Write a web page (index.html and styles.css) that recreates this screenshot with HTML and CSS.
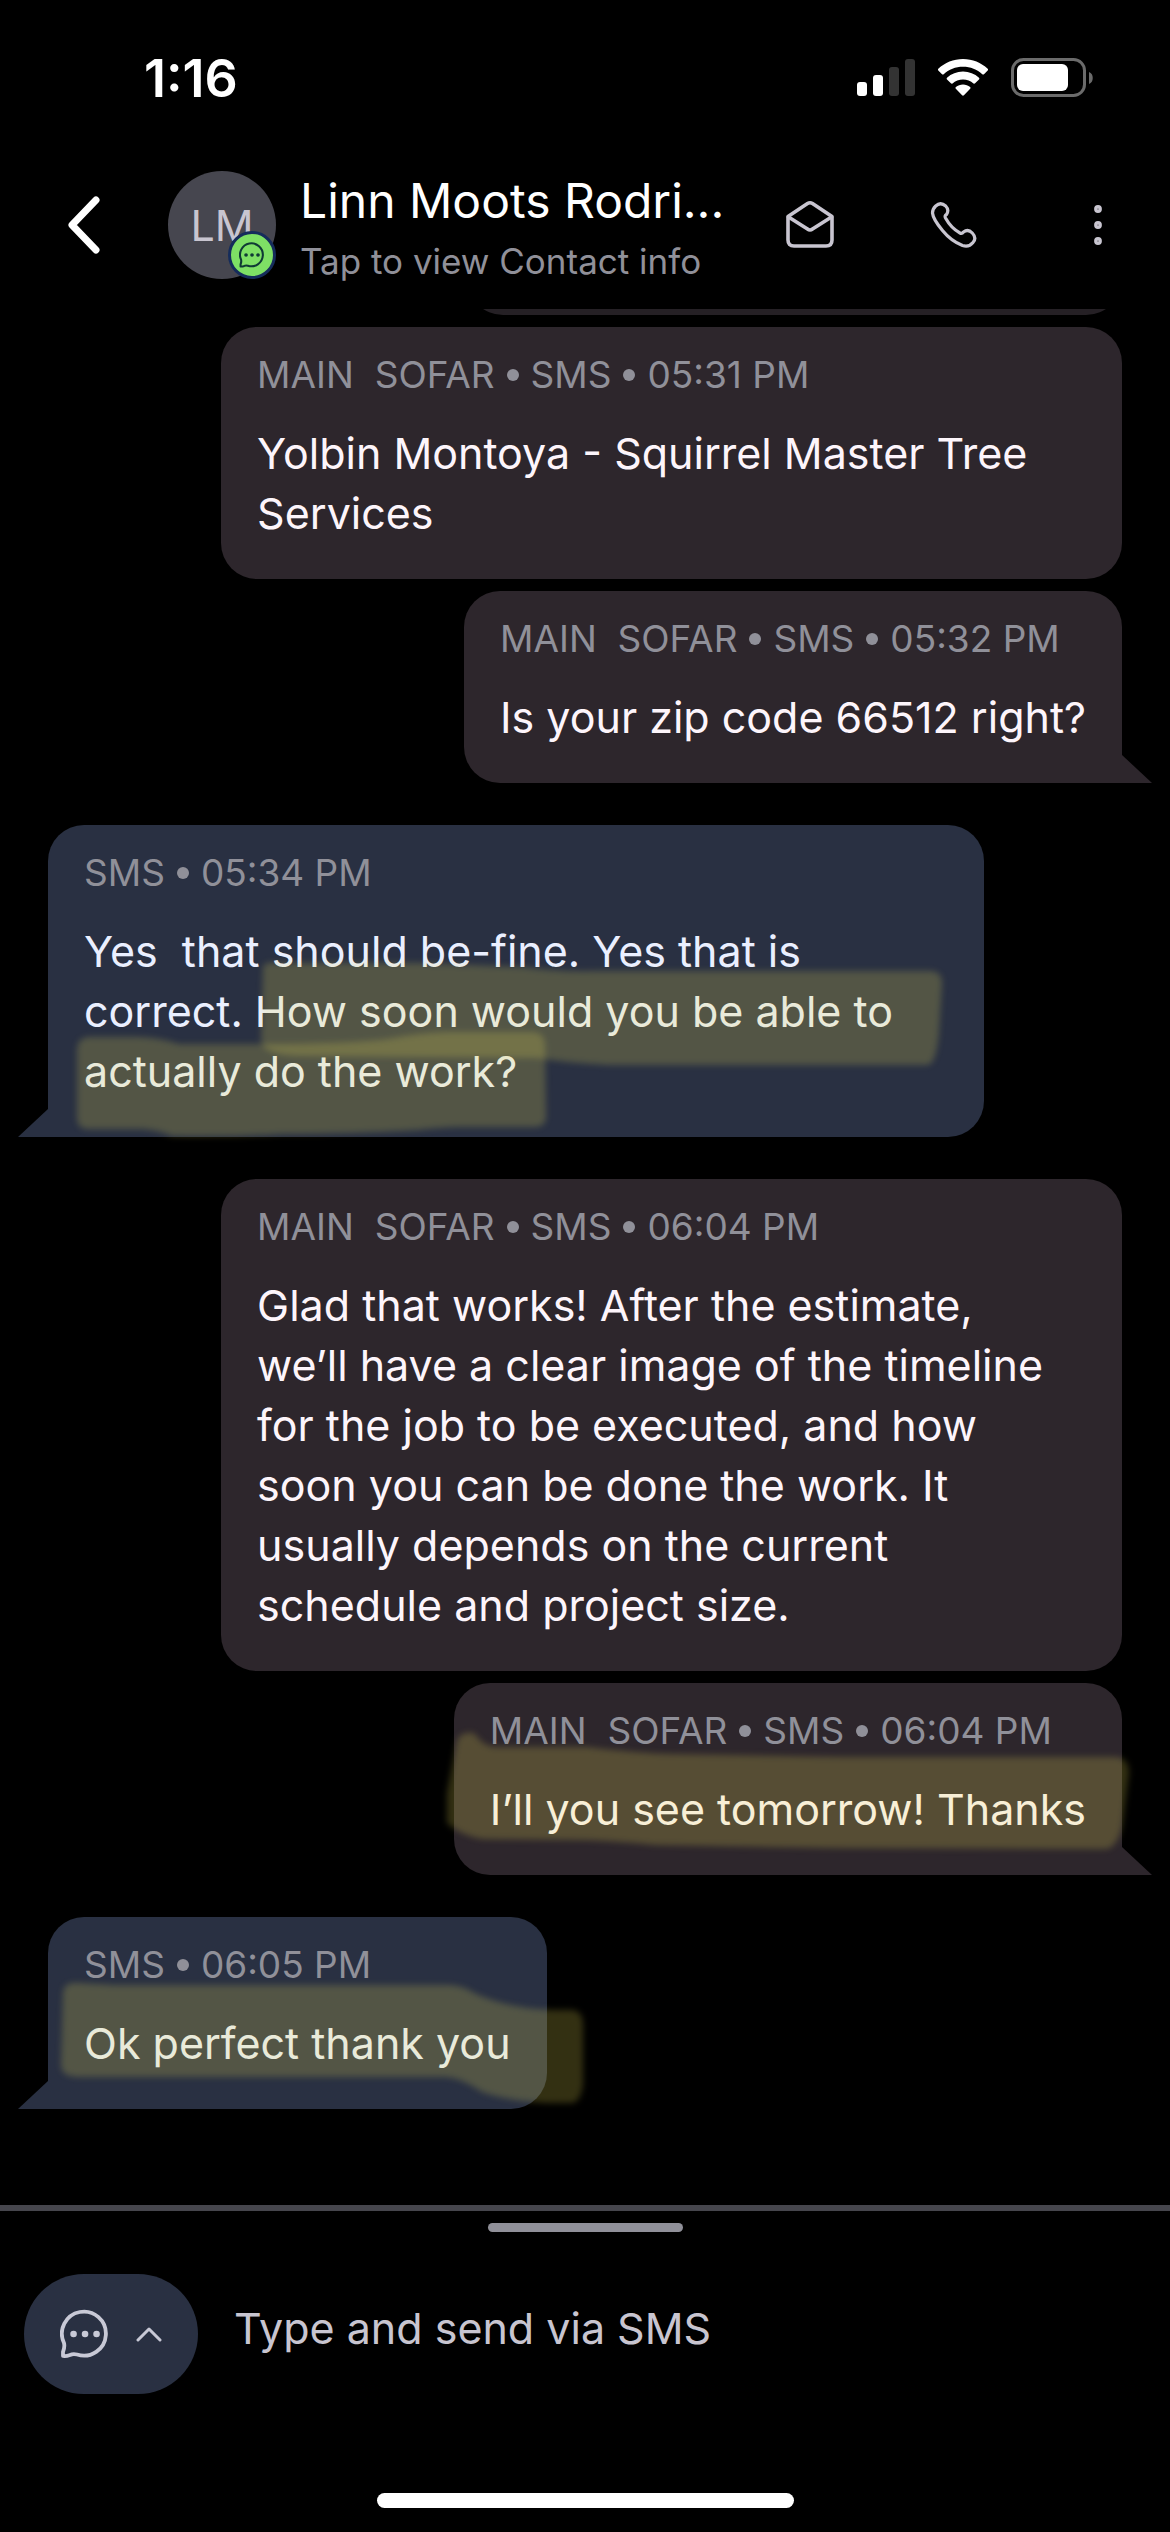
FILE: index.html
```html
<!DOCTYPE html>
<html lang="en">
<head>
  <meta charset="UTF-8" />
  <meta name="viewport" content="width=device-width, initial-scale=1.0" />
  <title>Linn Moots Rodri... – Messages</title>
  <link rel="stylesheet" href="styles.css">
</head>
<body>
  <div class="app">
    <div class="status-bar">
      <span class="clock">1:16</span>
      <div class="status-icons">
        <svg width="58" height="38" viewBox="0 0 58 38" fill="#fff">
          <rect x="0" y="23" width="10" height="14" rx="3" />
          <rect x="16" y="16" width="10" height="21" rx="3" />
          <rect x="32" y="8" width="10" height="29" rx="3" fill="#333" />
          <rect x="48" y="0" width="10" height="37" rx="3" fill="#333" />
        </svg>
        <svg width="50" height="38" viewBox="0 0 50 38" fill="#fff">
          <path d="M25 0C34.500 0 43.200 3.600 49.700 9.800C50.200 10.300 50.200 11 49.700 11.500L46 15.200C45.500 15.700 44.800 15.700 44.300 15.200C39.200 10.400 32.400 7.800 25 7.800S10.800 10.400 5.700 15.200C5.200 15.700 4.500 15.700 4 15.200L.3 11.500C-.2 11-.2 10.300.3 9.800C6.800 3.600 15.500 0 25 0Z" />
          <path d="M25 12.600C31.200 12.600 36.700 14.900 41 18.700C41.500 19.200 41.500 19.900 41 20.400L37.100 24.300C36.600 24.800 36 24.800 35.500 24.400C32.700 21.900 29 20.400 25 20.400S17.300 21.900 14.500 24.400C14 24.800 13.400 24.800 12.900 24.300L9 20.400C8.500 19.900 8.500 19.200 9 18.700C13.300 14.900 18.800 12.600 25 12.600Z" />
          <path d="M25 25.500C27.700 25.500 30.200 26.400 32.100 28C32.700 28.500 32.700 29.200 32.200 29.700L25.900 36.300C25.400 36.900 24.600 36.900 24.100 36.300L17.800 29.700C17.300 29.200 17.300 28.500 17.900 28C19.800 26.400 22.300 25.500 25 25.500Z" />
        </svg>
        <svg width="83" height="40" viewBox="0 0 83 40">
          <rect x="1.500" y="1.500" width="72" height="36" rx="11" fill="none" stroke="#6b6b6b" stroke-width="3" />
          <rect x="6" y="6" width="51" height="27" rx="6" fill="#fff" />
          <path d="M78 14C83 15.500 83 24.500 78 26Z" fill="#6b6b6b" />
        </svg>
      </div>
    </div>

    <header class="header">
      <button class="icon-button" aria-label="Back">
        <svg width="36" height="60" viewBox="0 0 36 60" fill="none" stroke="#fff" stroke-width="7" stroke-linecap="round" stroke-linejoin="round">
          <path d="M30 5L6 30L30 55" />
        </svg>
      </button>
      <div class="avatar">
        LM
        <span class="badge">
          <svg width="26" height="26" viewBox="0 0 50 50" fill="none" stroke="#0f3a35" stroke-width="4" stroke-linecap="round" stroke-linejoin="round">
            <path d="M3 47V43Q5 38 4 34A22 22 0 1 1 17 45.500Q13 44.500 10 46Q6 47.500 3 47Z" />
            <path d="M13.500 25h.1M25 25h.1M36.500 25h.1" stroke-width="7" />
          </svg>
        </span>
      </div>
      <div class="contact">
        <h1>Linn Moots Rodri...</h1>
        <p>Tap to view Contact info</p>
      </div>
      <div class="actions">
        <button class="icon-button" aria-label="Email">
          <svg width="50" height="50" viewBox="0 0 50 50" fill="none" stroke="#c8c5d0" stroke-width="3.600" stroke-linecap="round" stroke-linejoin="round">
            <path d="M3 16.500L22.500 3.500Q25 2 27.500 3.500L47 16.500V40Q47 46 41 46H9Q3 46 3 40Z" />
            <path d="M3.500 17L22.500 29Q25 31 27.500 29L46.500 17" />
          </svg>
        </button>
        <button class="icon-button" aria-label="Call">
          <svg width="50" height="50" viewBox="0 0 50 50" fill="none" stroke="#c8c5d0" stroke-width="3.200" stroke-linecap="round" stroke-linejoin="round">
            <path d="M3.500 13Q3.500 9 6.700 6Q11.500 1.500 16.700 6Q20.500 10 17.500 14.500Q15.300 15.500 16.500 18Q22 28 31 33Q33 34 34.500 32Q39 28.500 43.300 33Q48 38 44 42.500Q40 47.500 33.500 45.500Q22 41 13.500 30.500Q4 19 3.500 13Z" />
          </svg>
        </button>
        <button class="icon-button" aria-label="More options">
          <svg width="12" height="44" viewBox="0 0 12 44" fill="none" stroke="#c8c5d0" stroke-width="3.400">
            <circle cx="6" cy="6" r="2.200" />
            <circle cx="6" cy="22" r="2.200" />
            <circle cx="6" cy="38" r="2.200" />
          </svg>
        </button>
      </div>
    </header>

    <main class="conversation">
      <div class="bubble sent earlier"></div>

      <div class="bubble sent">
        <div class="meta"><span>MAIN  SOFAR</span><i></i><span>SMS</span><i></i><span>05:31 PM</span></div>
        <p>Yolbin Montoya - Squirrel Master Tree Services</p>
      </div>

      <div class="bubble sent last">
        <div class="meta"><span>MAIN  SOFAR</span><i></i><span>SMS</span><i></i><span>05:32 PM</span></div>
        <p>Is your zip code 66512 right?</p>
      </div>

      <div class="bubble received last">
        <div class="meta"><span>SMS</span><i></i><span>05:34 PM</span></div>
        <p>Yes  that should be-fine. Yes that is correct. How soon would you be able to actually do the work?</p>
        <svg class="marker" width="936" height="312" viewBox="0 0 936 312">
          <path d="M215 142Q217 136 228 138L370 138L474 142Q510 147 549 146H882Q894 146 894 158L891 208Q888 240 879 240H560Q520 238 489 233L250 231Q213 230 213 214Z" />
          <path d="M29 224Q30 212 42 212H88Q110 212 131 219H236Q310 218 340 214Q370 208 400 207H484Q496 207 497 219L498 292Q498 302 486 302H410Q385 303 370 305Q300 309 236 309Q180 312 124 311Q110 305 94 304H40Q29 304 29 292Z" />
        </svg>
      </div>

      <div class="bubble sent long">
        <div class="meta"><span>MAIN  SOFAR</span><i></i><span>SMS</span><i></i><span>06:04 PM</span></div>
        <p>Glad that works! After the estimate, we’ll have a clear image of the timeline for the job to be executed, and how soon you can be done the work. It usually depends on the current schedule and project size.</p>
      </div>

      <div class="bubble sent last">
        <div class="meta"><span>MAIN  SOFAR</span><i></i><span>SMS</span><i></i><span>06:04 PM</span></div>
        <p>I’ll you see tomorrow! Thanks</p>
        <svg class="marker" width="676" height="192" viewBox="0 0 676 192">
          <path d="M11 58Q14 48 28 50Q36 62 47 64H141Q190 70 224 71L396 74H668Q683 74 683 90L676 144Q670 166 659 166L386 165L209 162Q160 157 126 157L36 156Q14 152 1 140V110Z" />
        </svg>
      </div>

      <div class="bubble received last">
        <div class="meta"><span>SMS</span><i></i><span>06:05 PM</span></div>
        <p>Ok perfect thank you</p>
        <svg class="marker" width="503" height="192" viewBox="0 0 503 192">
          <path d="M15 76Q16 64 31 66L67 68H400Q414 68 426 76Q460 92 506 93H521Q535 92 535 108V168Q532 187 522 186H498Q460 184 434 175Q412 160 395 160H31Q13 160 13 148Z" />
        </svg>
      </div>
    </main>

    <footer class="composer">
      <div class="handle"></div>
      <form class="compose-row">
        <button type="button" class="channel" aria-label="Choose channel">
          <svg width="50" height="50" viewBox="0 0 50 50" fill="none" stroke="#c8c9d6" stroke-width="3.800" stroke-linecap="round" stroke-linejoin="round">
            <path d="M3 47V43Q5 38 4 34A22 22 0 1 1 17 45.500Q13 44.500 10 46Q6 47.500 3 47Z" />
            <path d="M13.500 25h.1M25 25h.1M36.500 25h.1" stroke-width="6.500" />
          </svg>
          <svg width="26" height="15" viewBox="0 0 26 15" fill="none" stroke="#c8c9d6" stroke-width="3" stroke-linecap="round" stroke-linejoin="round">
            <path d="M2 13L13 2L24 13" />
          </svg>
        </button>
        <input type="text" placeholder="Type and send via SMS" aria-label="Message" />
      </form>
      <div class="home-indicator"></div>
    </footer>
  </div>
</body>
</html>
```
FILE: styles.css
```css
* {
  box-sizing: border-box;
}

body {
  margin: 0;
  font-family: Inter, sans-serif;
  background-color: #000;
  color: #fff;
}

h1,
p {
  margin: 0;
  font-weight: 400;
}

svg {
  display: block;
}

.app {
  display: flex;
  flex-direction: column;
  height: 100vh;
}

/* Status bar */
.status-bar {
  display: flex;
  justify-content: space-between;
  align-items: center;
  height: 156px;
  padding: 0 76px 0 144px;
}

.clock {
  font-size: 52px;
  font-weight: 600;
}

.status-icons {
  display: flex;
  align-items: center;
  gap: 23px;
}

/* Header */
.header {
  display: flex;
  align-items: flex-start;
  padding: 15px 36px 24px 48px;
}

.icon-button {
  display: flex;
  justify-content: center;
  align-items: center;
  width: 72px;
  height: 108px;
  padding: 0;
  border: none;
  background: transparent;
  cursor: pointer;
}

.avatar {
  position: relative;
  display: flex;
  flex-shrink: 0;
  justify-content: center;
  align-items: center;
  width: 108px;
  height: 108px;
  margin: 0 24px 0 48px;
  border-radius: 50%;
  background-color: #46464f;
  color: #c8c5d0;
  font-size: 43px;
}

.badge {
  position: absolute;
  right: 0;
  bottom: 0;
  display: flex;
  justify-content: center;
  align-items: center;
  width: 48px;
  height: 48px;
  border: 3px solid #152c5b;
  border-radius: 50%;
  background-color: #7ee065;
}

.contact {
  flex: 1;
  min-width: 0;
  white-space: nowrap;
}

.contact h1 {
  margin-bottom: 6px;
  font-size: 48px;
  line-height: 60px;
}

.contact p {
  color: #909099;
  font-size: 35px;
  line-height: 48px;
}

.actions {
  display: flex;
  gap: 72px;
}

/* Messages */
.conversation {
  display: flex;
  flex: 1;
  flex-direction: column;
  justify-content: flex-end;
  min-height: 0;
  padding: 0 48px 96px;
  overflow: hidden;
}

.bubble {
  position: relative;
  flex-shrink: 0;
  margin-top: 12px;
  padding: 24px 36px 36px;
  border-radius: 36px;
  font-size: 43px;
  line-height: 60px;
}

.bubble p {
  white-space: pre-wrap;
}

.sent {
  align-self: flex-end;
  max-width: 77vw;
  background-color: #2d262c;
  color: #fdf5fb;
}

.received {
  align-self: flex-start;
  max-width: 80vw;
  background-color: #293042;
  color: #eaefff;
}

.earlier {
  width: 56vw;
  padding: 36px;
  background-color: #252025;
}

.long p {
  padding-right: 24px;
}

.last + .bubble,
.received {
  margin-top: 42px;
}

.sent.last {
  border-bottom-right-radius: 0;
}

.received.last {
  border-bottom-left-radius: 0;
}

/* Tail in the bottom corner of the last bubble in a group */
.last::after {
  content: "";
  position: absolute;
  bottom: 0;
  width: 30px;
  height: 28px;
  background-color: inherit;
}

.sent.last::after {
  left: 100%;
  clip-path: polygon(0 0, 100% 100%, 0 100%);
}

.received.last::after {
  right: 100%;
  clip-path: polygon(100% 0, 100% 100%, 0 100%);
}

.meta {
  display: flex;
  align-items: center;
  gap: 12px;
  margin-bottom: 24px;
  color: #909099;
  font-size: 37px;
  line-height: 48px;
  white-space: pre;
}

.meta i {
  width: 12px;
  height: 12px;
  border-radius: 50%;
  background-color: #909099;
}

/* Highlighter strokes over the text */
.marker {
  position: absolute;
  top: 0;
  left: 0;
  z-index: 1;
  overflow: visible;
  fill: rgba(232, 220, 82, 0.22);
  filter: blur(3px);
  pointer-events: none;
}

.sent .marker {
  right: 0;
  left: auto;
}

/* Composer */
.composer {
  border-top: 6px solid #46464d;
  padding: 12px 24px 24px;
}

.handle {
  width: 195px;
  height: 9px;
  margin: 0 auto 42px;
  border-radius: 5px;
  background-color: #909099;
}

.compose-row {
  display: flex;
  gap: 36px;
  margin-bottom: 99px;
}

.channel {
  display: flex;
  justify-content: center;
  align-items: center;
  gap: 26px;
  width: 174px;
  height: 120px;
  padding: 0;
  border: none;
  border-radius: 60px;
  background-color: #293042;
  cursor: pointer;
}

.compose-row input {
  flex: 1;
  min-width: 0;
  height: 108px;
  padding: 0;
  border: none;
  outline: none;
  background: transparent;
  color: #fff;
  font-family: inherit;
  font-size: 43px;
}

.compose-row input::placeholder {
  color: #c8c5d0;
  opacity: 1;
}

.home-indicator {
  width: 417px;
  height: 15px;
  margin: 0 auto;
  border-radius: 8px;
  background-color: #fff;
}
```
